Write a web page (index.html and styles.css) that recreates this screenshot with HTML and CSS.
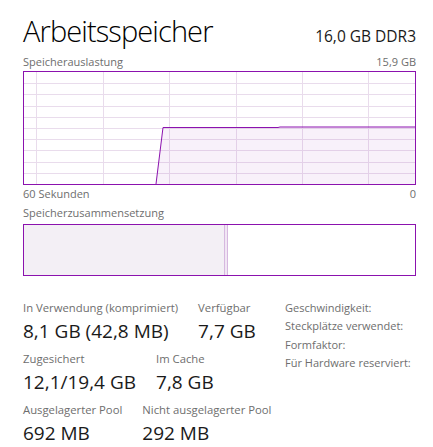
FILE: index.html
```html
<!DOCTYPE html>
<html lang="de">
<head>
    <meta charset="UTF-8">
    <meta name="viewport" content="width=device-width, initial-scale=1.0">
    <title>Arbeitsspeicher</title>
    <link rel="stylesheet" href="styles.css">
</head>
<body>
    <div class="panel">
        <div class="header">
            <h1 class="title">Arbeitsspeicher</h1>
            <span class="spec">16,0 GB DDR3</span>
        </div>

        <div class="caption-row usage-caption">
            <span>Speicherauslastung</span>
            <span>15,9 GB</span>
        </div>
        <div class="graph">
            <svg width="391" height="112" viewBox="0 0 391 112">
                <g stroke="#e9dcec" stroke-width="1">
                    <line x1="12.5" y1="0" x2="12.5" y2="112"/>
                    <line x1="79.5" y1="0" x2="79.5" y2="112"/>
                    <line x1="145.5" y1="0" x2="145.5" y2="112"/>
                    <line x1="212.5" y1="0" x2="212.5" y2="112"/>
                    <line x1="278.5" y1="0" x2="278.5" y2="112"/>
                    <line x1="344.5" y1="0" x2="344.5" y2="112"/>
                    <line x1="0" y1="11.5" x2="391" y2="11.5"/>
                    <line x1="0" y1="22.5" x2="391" y2="22.5"/>
                    <line x1="0" y1="34.5" x2="391" y2="34.5"/>
                    <line x1="0" y1="45.5" x2="391" y2="45.5"/>
                    <line x1="0" y1="56.5" x2="391" y2="56.5"/>
                    <line x1="0" y1="67.5" x2="391" y2="67.5"/>
                    <line x1="0" y1="78.5" x2="391" y2="78.5"/>
                    <line x1="0" y1="90.5" x2="391" y2="90.5"/>
                    <line x1="0" y1="101.5" x2="391" y2="101.5"/>
                </g>
                <polygon points="132,112 139,55.5 254,55.5 256,55 391,55 391,112" fill="#8b12ae" fill-opacity="0.06"/>
                <polyline points="132,112 139,55.5 254,55.5 256,55 391,55" fill="none" stroke="#8b12ae" stroke-width="1"/>
            </svg>
        </div>
        <div class="caption-row axis-caption">
            <span>60 Sekunden</span>
            <span>0</span>
        </div>

        <div class="caption-row composition-caption">
            <span>Speicherzusammensetzung</span>
        </div>
        <div class="composition">
            <div class="segment used"></div>
            <div class="segment modified"></div>
            <div class="segment free"></div>
        </div>

        <div class="details">
            <div class="stats">
                <div class="stat-row">
                    <div class="stat">
                        <span class="stat-label">In Verwendung (komprimiert)</span>
                        <span class="stat-value">8,1 GB (42,8 MB)</span>
                    </div>
                    <div class="stat">
                        <span class="stat-label">Verfügbar</span>
                        <span class="stat-value">7,7 GB</span>
                    </div>
                </div>
                <div class="stat-row">
                    <div class="stat">
                        <span class="stat-label">Zugesichert</span>
                        <span class="stat-value">12,1/19,4 GB</span>
                    </div>
                    <div class="stat">
                        <span class="stat-label">Im Cache</span>
                        <span class="stat-value">7,8 GB</span>
                    </div>
                </div>
                <div class="stat-row">
                    <div class="stat">
                        <span class="stat-label">Ausgelagerter Pool</span>
                        <span class="stat-value">692 MB</span>
                    </div>
                    <div class="stat">
                        <span class="stat-label">Nicht ausgelagerter Pool</span>
                        <span class="stat-value">292 MB</span>
                    </div>
                </div>
            </div>

            <ul class="props">
                <li>Geschwindigkeit:</li>
                <li>Steckplätze verwendet:</li>
                <li>Formfaktor:</li>
                <li>Für Hardware reserviert:</li>
            </ul>
        </div>
    </div>
</body>
</html>
```

FILE: styles.css
```css
* {
    margin: 0;
    padding: 0;
    box-sizing: border-box;
}

body {
    font-family: 'Open Sans', 'Noto Sans', sans-serif;
    background: #ffffff;
    color: #1a1a1a;
}

.panel {
    width: 416px;
    padding: 13px 0 0 23px;
}

.header {
    display: flex;
    justify-content: space-between;
    align-items: baseline;
    height: 36px;
}

.title {
    font-size: 29px;
    font-weight: 300;
    line-height: 36px;
    letter-spacing: -0.9px;
    color: #000000;
}

.spec {
    font-size: 15.5px;
    color: #1a1a1a;
}

.caption-row {
    display: flex;
    justify-content: space-between;
    font-size: 11px;
    line-height: 14px;
    color: #6e6e6e;
}

.usage-caption {
    margin-top: 6px;
}

.axis-caption {
    margin-top: 2px;
}

.composition-caption {
    margin-top: 5px;
}

.graph {
    border: 1px solid #8b12ae;
    height: 114px;
    margin-top: 2px;
}

.graph svg {
    display: block;
}

.composition {
    display: flex;
    border: 1px solid #8b12ae;
    height: 52px;
    margin-top: 4px;
}

.segment.used {
    width: 200px;
    background: #f3eff5;
}

.segment.modified {
    width: 4px;
    background: #f1e6f4;
    border-left: 1px solid #d6b8df;
    border-right: 1px solid #d6b8df;
}

.segment.free {
    flex: 1;
    background: #ffffff;
}

.details {
    display: flex;
    margin-top: 22px;
}

.stats {
    display: flex;
    flex-direction: column;
    gap: 4px;
    width: 262px;
}

.stat-row {
    display: flex;
    gap: 20px;
}

.stat {
    display: flex;
    flex-direction: column;
}

.stat-label {
    font-size: 11.3px;
    line-height: 20px;
    color: #6e6e6e;
}

.stat-value {
    font-size: 19px;
    line-height: 27px;
    color: #1a1a1a;
}

.props {
    list-style: none;
    font-size: 11px;
    line-height: 18.4px;
    color: #6e6e6e;
    padding-top: 1px;
}
```
